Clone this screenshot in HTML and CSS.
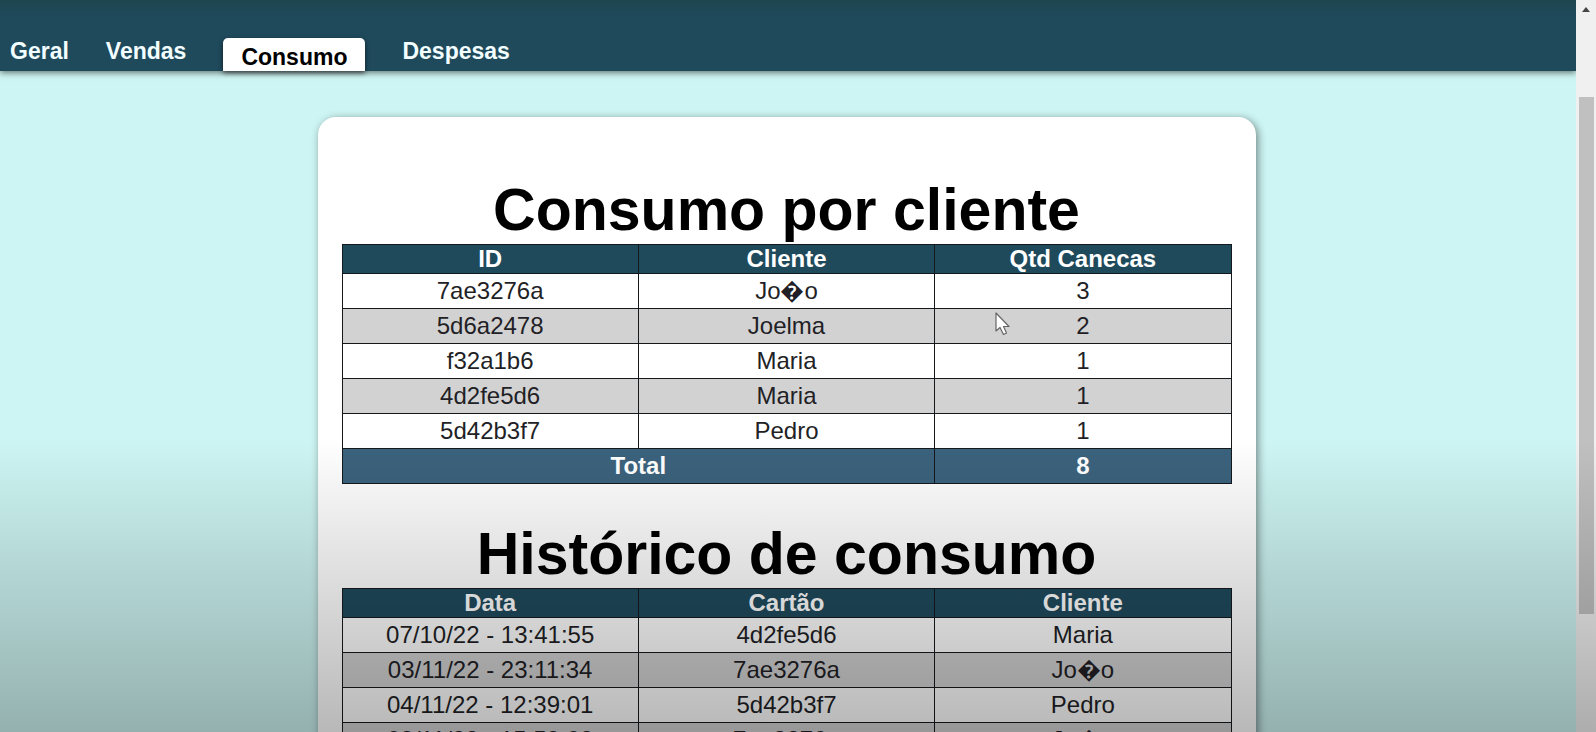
FILE: index.html
```html
<!DOCTYPE html>
<html lang="pt-BR">
<head>
<meta charset="utf-8">
<title>Consumo</title>
<link rel="stylesheet" href="styles.css">
</head>
<body>
<div class="page">
  <header class="topbar">
    <nav class="tabs">
      <a class="tab" href="#geral">Geral</a>
      <a class="tab" href="#vendas">Vendas</a>
      <a class="tab tab-active" href="#consumo" aria-current="page">Consumo</a>
      <a class="tab" href="#despesas">Despesas</a>
    </nav>
  </header>
  <main class="content">
    <div class="card">
      <section class="report">
        <h1 class="title" id="por-cliente">Consumo por cliente</h1>
        <table class="grid" aria-labelledby="por-cliente">
          <thead><tr><th>ID</th><th>Cliente</th><th>Qtd Canecas</th></tr></thead>
          <tbody>
            <tr><td>7ae3276a</td><td>Jo&#xFFFD;o</td><td>3</td></tr>
            <tr><td>5d6a2478</td><td>Joelma</td><td>2</td></tr>
            <tr><td>f32a1b6</td><td>Maria</td><td>1</td></tr>
            <tr><td>4d2fe5d6</td><td>Maria</td><td>1</td></tr>
            <tr><td>5d42b3f7</td><td>Pedro</td><td>1</td></tr>
          </tbody>
          <tfoot><tr><td colspan="2">Total</td><td>8</td></tr></tfoot>
        </table>
      </section>
      <section class="report">
        <h1 class="title" id="historico">Histórico de consumo</h1>
        <table class="grid" aria-labelledby="historico">
          <thead><tr><th>Data</th><th>Cartão</th><th>Cliente</th></tr></thead>
          <tbody>
            <tr><td>07/10/22 - 13:41:55</td><td>4d2fe5d6</td><td>Maria</td></tr>
            <tr><td>03/11/22 - 23:11:34</td><td>7ae3276a</td><td>Jo&#xFFFD;o</td></tr>
            <tr><td>04/11/22 - 12:39:01</td><td>5d42b3f7</td><td>Pedro</td></tr>
            <tr><td>08/11/22 - 15:59:08</td><td>7ae3276a</td><td>Jo&#xFFFD;o</td></tr>
          </tbody>
        </table>
      </section>
    </div>
  </main>
</div>
<div class="scrollbar" aria-hidden="true">
  <svg class="scroll-arrow" viewBox="0 0 8 5"><path d="M0 5L4 0L8 5Z" fill="#454545"/></svg>
  <div class="scroll-thumb"></div>
</div>
<div class="shade"></div>
<svg class="pointer" viewBox="0 0 15 24" aria-hidden="true"><path d="M1 1V19L5 15.500L8.500 22.500L11.500 21L8.500 14.500H14Z" fill="#fff" stroke="#666" stroke-width="1.200" stroke-linejoin="round"/></svg>
</body>
</html>
```

FILE: styles.css
```css
* {
  box-sizing: border-box;
}

body {
  margin: 0;
  height: 100vh;
  display: flex;
  overflow: hidden;
  position: relative;
  background: #cdf5f3;
  color: #000;
  font-family: "Liberation Sans", Arial, sans-serif;
}

.page {
  flex: 1;
  min-width: 0;
}

.topbar {
  display: flex;
  align-items: flex-end;
  height: 71px;
  padding: 0 10px;
  background: linear-gradient(#1e464f, #1f4a5c 16px, #1f4a5c);
  box-shadow: 0 2px 6px rgba(0, 0, 0, 0.5);
}

.tabs {
  display: flex;
  align-items: flex-end;
  gap: 37px;
  font-size: 23px;
  font-weight: bold;
  line-height: 28px;
}

.tab {
  padding-bottom: 6px;
  color: #f2feff;
  text-decoration: none;
}

.tab-active {
  padding: 5px 18px 0;
  border-radius: 5px 5px 0 0;
  background: #fff;
  color: #000;
  box-shadow: 0 2px 5px rgba(0, 0, 0, 0.6);
}

.content {
  padding: 46px 3px 0 0;
}

.card {
  max-width: 938px;
  margin: 0 auto;
  padding: 59px 24px 40px;
  border-radius: 18px;
  background: #fff;
  box-shadow: 2px 2px 8px rgba(0, 0, 0, 0.45);
}

.report {
  margin-bottom: 36px;
}

.title {
  margin: 0;
  font-size: 59px;
  line-height: 68px;
  text-align: center;
}

.grid {
  width: 100%;
  table-layout: fixed;
  border-collapse: collapse;
  font-size: 24px;
  line-height: 28px;
  text-align: center;
}

.grid th,
.grid td {
  height: 35px;
  padding: 0;
  border: 1px solid #16191c;
  color: #221f26;
}

.grid th {
  height: 29px;
  background: #1f4a5c;
  color: #fff;
}

.grid tbody tr:nth-child(even) {
  background: #d3d2d3;
}

.grid tfoot td {
  background: #3b627d;
  color: #fff;
  font-weight: bold;
}

.scrollbar {
  display: flex;
  flex-direction: column;
  align-items: center;
  width: 20px;
  background: #f0f0f1;
}

.scroll-arrow {
  width: 8px;
  height: 5px;
  margin: 7px 0 85px;
}

.scroll-thumb {
  width: 15px;
  height: 517px;
  background: #c0c0c0;
}

/* Darkens the lower part of the window */
.shade {
  position: absolute;
  right: 0;
  bottom: 0;
  left: 0;
  height: 40vh;
  background: linear-gradient(rgba(0, 0, 0, 0), rgba(0, 0, 0, 0.28));
  pointer-events: none;
}

.pointer {
  position: absolute;
  top: 312px;
  left: 995px;
  width: 15px;
  height: 24px;
}
```
